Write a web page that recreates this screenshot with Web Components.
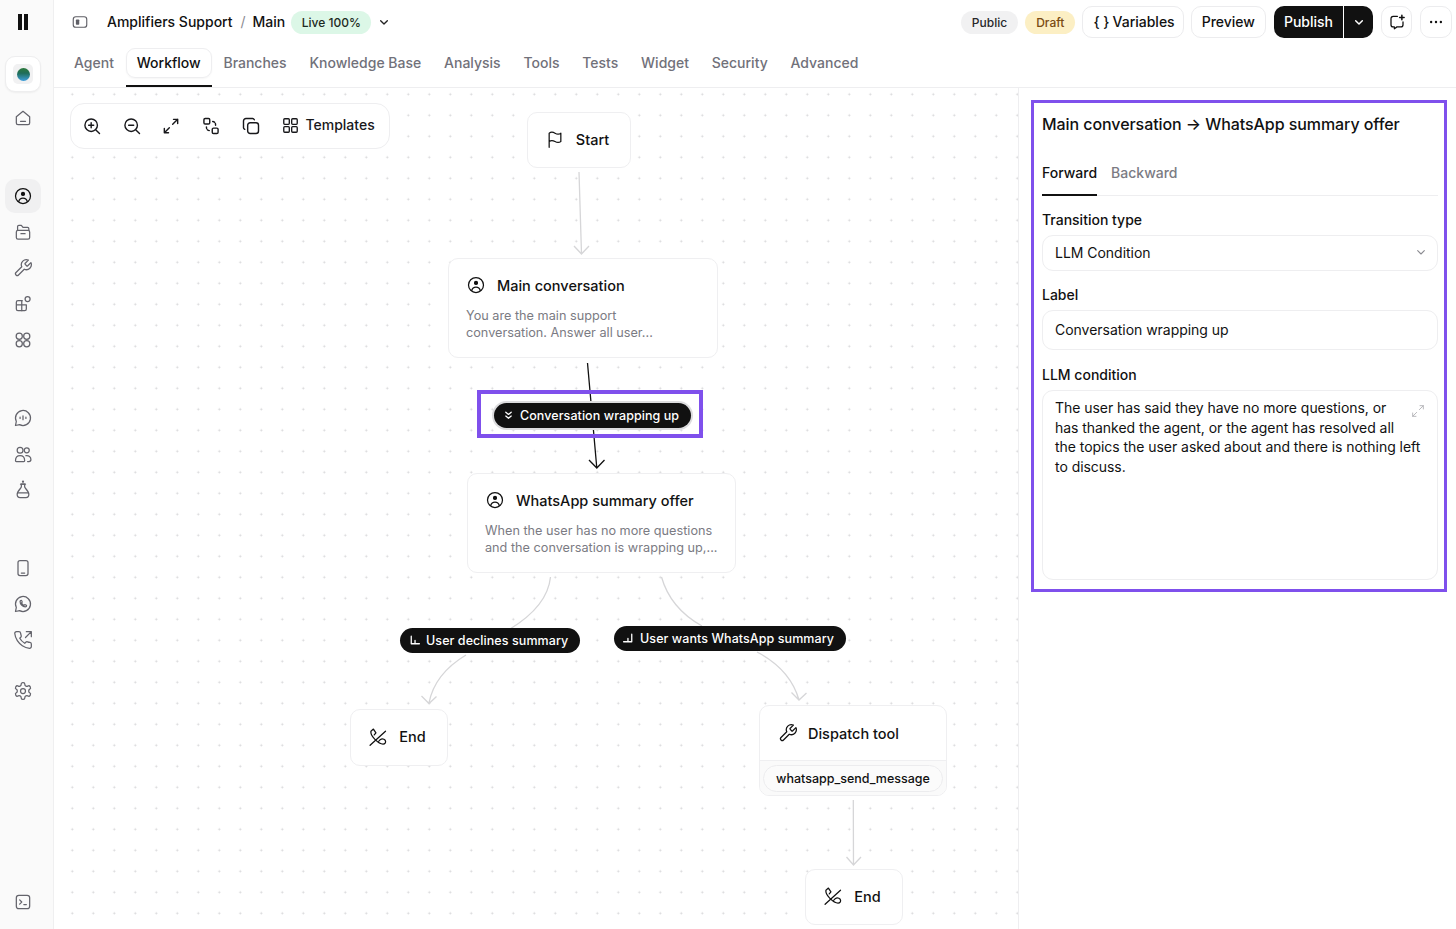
<!DOCTYPE html>
<html lang="en">
<head>
<meta charset="utf-8">
<title>Amplifiers Support</title>
<style>
  html, body { margin: 0; height: 100%; background: #fff; overflow: hidden; }
  body { font-family: Inter, "Liberation Sans", sans-serif; color: #111; }
</style>
</head>
<body>
<app-shell>
  <nav-rail slot="rail"></nav-rail>
  <top-bar slot="top"></top-bar>
  <flow-canvas slot="canvas">
    <tool-bar></tool-bar>
    <flow-node x="527" y="112" w="104" h="56" icon="flag" label="Start"></flow-node>
    <flow-node x="448" y="258" w="270" h="100" icon="agent" label="Main conversation">You are the main support<br>conversation. Answer all user...</flow-node>
    <flow-node x="467" y="473" w="269" h="100" icon="agent" label="WhatsApp summary offer">When the user has no more questions<br>and the conversation is wrapping up,...</flow-node>
    <flow-node x="350" y="709" w="98" h="57" icon="phoneoff" label="End"></flow-node>
    <flow-node x="759" y="705" w="188" h="91" icon="wrench" label="Dispatch tool" tool="whatsapp_send_message"></flow-node>
    <flow-node x="805" y="869" w="98" h="56" icon="phoneoff" label="End"></flow-node>
    <edge-pill x="494" y="403" icon="chevs" ring>Conversation wrapping up</edge-pill>
    <edge-pill x="400" y="628" icon="cornerl">User declines summary</edge-pill>
    <edge-pill x="614" y="626" icon="cornerr">User wants WhatsApp summary</edge-pill>
  </flow-canvas>
  <side-panel slot="panel"></side-panel>
</app-shell>

<script>
(function() {
'use strict';

// stroke icons, all on a 24 box
const ICONS = {
  home: '<path d="M4 10.5 12 4l8 6.5V18a2 2 0 0 1-2 2H6a2 2 0 0 1-2-2z"/><path d="M9 16h6"/>',
  agent: '<circle cx="12" cy="12" r="9"/><circle cx="12" cy="9.5" r="1.8" fill="currentColor"/><path d="M6.8 18.6C7.6 15.6 9.6 14.5 12 14.5s4.400 1.100 5.200 4.100"/>',
  folder: '<rect x="4" y="10" width="16" height="10.500" rx="2"/><path d="M5.500 10V5.500a1.500 1.500 0 0 1 1.500-1.500h3l2 2.500h5.500a1.500 1.500 0 0 1 1.500 1.500v2"/><path d="M9.500 14h5"/>',
  wrench: '<path d="M14.700 6.300a1 1 0 0 0 0 1.400l1.600 1.600a1 1 0 0 0 1.400 0l3.770-3.770a6 6 0 0 1-7.940 7.940l-6.910 6.910a2.120 2.120 0 0 1-3-3l6.910-6.910a6 6 0 0 1 7.940-7.940l-3.760 3.760z"/>',
  blocks: '<path d="M11 8H6a2 2 0 0 0-2 2v8a2 2 0 0 0 2 2h8a2 2 0 0 0 2-2v-5H4"/><path d="M10.500 8v12"/><circle cx="17.500" cy="6" r="3"/>',
  circles: '<circle cx="7.500" cy="7.500" r="3.700"/><circle cx="16.500" cy="7.500" r="3.700"/><circle cx="7.500" cy="16.500" r="3.700"/><circle cx="16.500" cy="16.500" r="3.700"/>',
  chat: '<path d="M7.900 20A9 9 0 1 0 4 16.100L3 21z"/><path d="M8.500 11v1.500M12 9.500v4.500M15.500 11v1.500"/>',
  users: '<circle cx="8.500" cy="7.500" r="3.500"/><circle cx="16.500" cy="7.500" r="3"/><path d="M3 20c0-4 2.500-6 5.500-6s5.500 2 5.500 6c0 .5-.5 1-1 1H4c-.5 0-1-.5-1-1z"/><path d="M15.500 14c3.500-.5 6 1.500 6 4.500 0 1.500-1 2.500-2.500 2.500h-1.500"/>',
  flask: '<path d="M10 8.500V5h4v3.500c0 1 5 5 5 8.500 0 2.500-1.500 4-3.500 4h-7C6.500 21 5 19.500 5 17c0-3.500 5-7.500 5-8.500z"/><path d="M6 15.500h12M9 5h6"/><circle cx="12" cy="2" r=".6" fill="currentColor"/>',
  mobile: '<rect x="6" y="3" width="12" height="18" rx="2.500"/><path d="M10 18h4"/>',
  whatsapp: '<path d="M7.900 20A9 9 0 1 0 4 16.100L3 21z"/><path d="M8.500 9c0-.8.700-1.500 1.300-1.500s1.200 1.500 1.200 2-.7.800-.7 1.200c.5 1.200 1.600 2.300 2.800 2.800.4 0 .7-.7 1.200-.7s2 .6 2 1.200-.7 1.300-1.500 1.300c-3.500 0-6.300-3.300-6.300-6.300z"/>',
  phoneout: '<path d="M22 16.920v3a2 2 0 0 1-2.180 2 19.790 19.790 0 0 1-8.630-3.070 19.500 19.500 0 0 1-6-6 19.790 19.790 0 0 1-3.070-8.670A2 2 0 0 1 4.110 2h3a2 2 0 0 1 2 1.720 12.840 12.840 0 0 0 .7 2.810 2 2 0 0 1-.45 2.110L8.090 9.910a16 16 0 0 0 6 6l1.270-1.270a2 2 0 0 1 2.110-.45 12.840 12.840 0 0 0 2.810.7A2 2 0 0 1 22 16.920z"/><path d="M16 2h6v6M15 9l7-7"/>',
  gear: '<path d="M12.220 2h-.44a2 2 0 0 0-2 2v.18a2 2 0 0 1-1 1.730l-.43.25a2 2 0 0 1-2 0l-.15-.08a2 2 0 0 0-2.730.73l-.22.38a2 2 0 0 0 .73 2.730l.15.1a2 2 0 0 1 1 1.720v.51a2 2 0 0 1-1 1.740l-.15.09a2 2 0 0 0-.73 2.730l.22.38a2 2 0 0 0 2.730.73l.15-.08a2 2 0 0 1 2 0l.43.25a2 2 0 0 1 1 1.730V20a2 2 0 0 0 2 2h.44a2 2 0 0 0 2-2v-.18a2 2 0 0 1 1-1.730l.43-.25a2 2 0 0 1 2 0l.15.08a2 2 0 0 0 2.730-.73l.22-.39a2 2 0 0 0-.73-2.730l-.15-.08a2 2 0 0 1-1-1.740v-.5a2 2 0 0 1 1-1.740l.15-.09a2 2 0 0 0 .73-2.730l-.22-.38a2 2 0 0 0-2.730-.73l-.15.08a2 2 0 0 1-2 0l-.43-.25a2 2 0 0 1-1-1.730V4a2 2 0 0 0-2-2z"/><circle cx="12" cy="12" r="3"/>',
  terminal: '<rect x="4" y="4" width="16" height="16" rx="3"/><path d="m8 9.500 2.500 2.500L8 14.500M13 15h3"/>',
  panel: '<rect x="3" y="5" width="18" height="14" rx="3.500"/><rect x="6.500" y="8.500" width="4.500" height="7" rx="1" fill="currentColor" stroke="none"/>',
  chevron: '<path d="m7 10 5 5 5-5"/>',
  zoomin: '<circle cx="11" cy="11" r="7.500"/><path d="m21 21-4.300-4.300M11 8v6M8 11h6"/>',
  zoomout: '<circle cx="11" cy="11" r="7.500"/><path d="m21 21-4.300-4.300M8 11h6"/>',
  expand: '<path d="m14 10 6-6M15 4h5v5M10 14l-6 6M4 15v5h5"/>',
  layout: '<rect x="3.500" y="3" width="7" height="6.500" rx="1.500"/><rect x="13.500" y="14.500" width="7" height="6.500" rx="1.500"/><path d="M14 6.500c2 0 3.500 1.500 3.500 4.500M10 17.500c-2 0-3.500-1.500-3.500-4.500" stroke-dasharray="2.500 2"/>',
  copy: '<rect x="8" y="8" width="13" height="13" rx="3"/><path d="M4.500 16C3.500 15.500 3 14.800 3 14V6a3 3 0 0 1 3-3h8c.8 0 1.500.5 2 1.500"/>',
  grid: '<rect x="3.500" y="3.500" width="7" height="7" rx="1.200"/><rect x="13.500" y="3.500" width="7" height="7" rx="1.200"/><rect x="3.500" y="13.500" width="7" height="7" rx="1.200"/><rect x="13.500" y="13.500" width="7" height="7" rx="1.200"/>',
  flag: '<path d="M5 22V5c2-1.500 4.500-1.500 7 0s5 1.500 7 0v10c-2 1.500-4.500 1.500-7 0s-5-1.500-7 0"/>',
  phoneoff: '<path d="M2.500 22 21 5"/><path d="M6.500 2.500 3.500 5c-.5 3 1.500 6.500 4.500 9.500 2.500 2.500 6 6 10 6 2.500 0 3.500-2 3-3.700-.5-1.800-3-2.800-5-2.300-2 .5-2.500 2-3 2.500M6.500 2.500l3 4.500-2 2.500"/>',
  chevs: '<path d="m7 6 5 4 5-4M7 13l5 4 5-4"/>',
  cornerl: '<path d="M6 4v14h15M13 18v-6"/>',
  cornerr: '<path d="M18 4v14H3M11 18v-6"/>',
  comment: '<path d="M12.500 4.500H7a3 3 0 0 0-3 3v8a3 3 0 0 0 3 3h1.500v2.500l3.500-2.500h5a3 3 0 0 0 3-3V12"/><path d="M18.500 3v6M15.500 6h6" stroke-width="2"/>',
  dots: '<circle cx="5.500" cy="12" r="1.600" fill="currentColor" stroke="none"/><circle cx="12" cy="12" r="1.600" fill="currentColor" stroke="none"/><circle cx="18.500" cy="12" r="1.600" fill="currentColor" stroke="none"/>'
};

customElements.define('x-icon', class extends HTMLElement {
  connectedCallback() {
    if (this.shadowRoot) return;
    let size = this.getAttribute('size') || 18;
    let sw = this.getAttribute('sw') || 1.7;
    this.attachShadow({mode: 'open'}).innerHTML = `
      <style>:host { display: inline-flex; flex: none; } svg { display: block; }</style>
      <svg width="${size}" height="${size}" viewBox="0 0 24 24" fill="none" stroke="currentColor"
        stroke-width="${sw}" stroke-linecap="round" stroke-linejoin="round">${ICONS[this.getAttribute('name')]}</svg>`;
  }
});

customElements.define('app-shell', class extends HTMLElement {
  constructor() {
    super();
    this.attachShadow({mode: 'open'}).innerHTML = `
      <style>
      :host { display: grid; width: 1456px; height: 929px; overflow: hidden;
        grid-template-columns: 54px 964px 438px; grid-template-rows: 88px 841px; }
      ::slotted([slot="rail"]) { grid-row: 1 / 3; }
      ::slotted([slot="top"]) { grid-column: 2 / 4; }
      </style>
      <slot name="rail"></slot><slot name="top"></slot><slot name="canvas"></slot><slot name="panel"></slot>`;
  }
});

customElements.define('rail-item', class extends HTMLElement {
  constructor() {
    super();
    this.attachShadow({mode: 'open'}).innerHTML = `
      <style>
      :host { display: flex; width: 36px; height: 36px; align-items: center; justify-content: center;
        border-radius: 10px; color: #64646c; }
      :host([active]) { background: #f0f0f1; color: #111; height: 34px; margin: 1px 0; }
      </style><slot></slot>`;
  }
});

customElements.define('nav-rail', class extends HTMLElement {
  constructor() {
    super();
    const item = (n, extra = '') => `<rail-item ${extra}><x-icon name="${n}" size="20" sw="1.500"></x-icon></rail-item>`;
    this.attachShadow({mode: 'open'}).innerHTML = `
      <style>
      :host { display: flex; flex-direction: column; align-items: center; box-sizing: border-box;
        background: #fafafa; border-right: 1px solid #efeff0; padding: 14px 7px 0 0; height: 929px; }
      .mark { display: flex; gap: 2px; height: 16px; margin-bottom: 26px; }
      .mark i { display: block; width: 4px; background: #111; }
      .logo { display: flex; box-sizing: border-box; width: 36px; height: 36px; padding: 7px; margin-bottom: 8px;
        background: #fff; border: 1px solid #eeeeef; border-radius: 10px; box-shadow: 0 1px 2px rgba(0,0,0,.05); }
      .logo div { flex: 1; display: flex; align-items: center; justify-content: center; background: #f1f1f2; border-radius: 5px; }
      .logo b { display: block; width: 13px; height: 13px; border-radius: 50%;
        background: linear-gradient(#2d7a3c 0, #1f6d5a 40%, #3f9fdc 100%); }
      .group { display: flex; flex-direction: column; }
      .a, .b, .c { margin-top: 42px; } .d { margin-top: 15px; }
      .end { margin-top: auto; margin-bottom: 9px; }
      </style>
      <div class="mark"><i></i><i></i></div>
      <div class="logo"><div><b></b></div></div>
      ${item('home')}
      <div class="group a">${item('agent', 'active')}${item('folder')}${item('wrench')}${item('blocks')}${item('circles')}</div>
      <div class="group b">${item('chat')}${item('users')}${item('flask')}</div>
      <div class="group c">${item('mobile')}${item('whatsapp')}${item('phoneout')}</div>
      <div class="group d">${item('gear')}</div>
      <div class="end">${item('terminal')}</div>`;
  }
});

customElements.define('top-bar', class extends HTMLElement {
  constructor() {
    super();
    const tabs = ['Agent', 'Workflow', 'Branches', 'Knowledge Base', 'Analysis', 'Tools', 'Tests', 'Widget', 'Security', 'Advanced'];
    this.attachShadow({mode: 'open'}).innerHTML = `
      <style>
      :host { display: flex; flex-direction: column; box-sizing: border-box; height: 88px; background: #fff;
        border-bottom: 1px solid #eeeef0; font-size: 14px; }
      .row { display: flex; align-items: center; height: 44px; padding: 0 4px 0 17px; }
      .toggle { color: #5f5f66; margin-right: 18px; }
      .crumb { font-weight: 450; position: relative; top: -1px; }
      .sep { color: #8b8b92; margin: 0 7px 0 8px; position: relative; top: -1px; }
      .pill { display: inline-flex; align-items: center; height: 23px; padding: 0 11px; border-radius: 12px;
        font-size: 12px; font-weight: 500; }
      .live { background: #dcf7e7; color: #1c2a22; margin-left: 6px; padding: 0 10.500px; }
      .more { margin-left: 5px; color: #222; }
      .spacer { flex: 1; }
      .right { display: flex; align-items: center; gap: 7px; }
      .public { background: #f1f1f2; color: #27272a; }
      .draft { background: #fcefc4; color: #7a4a12; }
      .btn { display: inline-flex; align-items: center; justify-content: center; box-sizing: border-box; height: 32px;
        padding: 0 10px 1px; border: 1px solid #ececee; border-radius: 10px; font-weight: 450; background: #fff; white-space: pre; }
      .vars { padding-right: 8px; }
      .pub { display: flex; height: 32px; background: #111; color: #fff; border-radius: 10px; overflow: hidden; font-weight: 500; margin-left: 1px; }
      .pub span { display: flex; align-items: center; padding: 0 10px 1px; }
      .pub div { display: flex; align-items: center; justify-content: center; width: 29px; border-left: 1px solid #fff; }
      .square { width: 31px; padding: 0; margin-left: 1px; }
      .square + .square { width: 32px; }
      .braces { margin-right: 3px; }
      nav { display: flex; gap: .8px; padding-left: 9px; flex: 1; align-items: flex-start; padding-top: 4px; }
      nav a { display: flex; align-items: center; height: 30px; padding: 0 10px 1px; color: #71717a;
        font-weight: 450; position: relative; box-sizing: border-box; border: 1px solid transparent; border-radius: 9px; }
      nav a.on { color: #111; font-weight: 500; border-color: #eeeef0; box-shadow: 0 1px 2px rgba(0,0,0,.04); }
      nav a.on::after { content: ""; position: absolute; left: -1px; right: -1px; bottom: -10px; height: 2px; background: #111; }
      </style>
      <div class="row">
        <x-icon class="toggle" name="panel" size="18" sw="1.500"></x-icon>
        <span class="crumb">Amplifiers Support</span><span class="sep">/</span><span class="crumb">Main</span>
        <span class="pill live">Live 100%</span>
        <x-icon class="more" name="chevron" size="16" sw="2"></x-icon>
        <div class="spacer"></div>
        <div class="right">
          <span class="pill public">Public</span>
          <span class="pill draft">Draft</span>
          <span class="btn vars"><span class="braces">{ }</span>Variables</span>
          <span class="btn">Preview</span>
          <div class="pub"><span>Publish</span><div><x-icon name="chevron" size="16" sw="2.200"></x-icon></div></div>
          <span class="btn square"><x-icon name="comment" size="18"></x-icon></span>
          <span class="btn square"><x-icon name="dots" size="18"></x-icon></span>
        </div>
      </div>
      <nav>${tabs.map(t => `<a class="${t === 'Workflow' ? 'on' : ''}">${t}</a>`).join('')}</nav>`;
  }
});

customElements.define('tool-bar', class extends HTMLElement {
  constructor() {
    super();
    const names = ['zoomin', 'zoomout', 'expand', 'layout', 'copy'];
    this.attachShadow({mode: 'open'}).innerHTML = `
      <style>
      :host { position: absolute; left: 16px; top: 15px; display: flex; align-items: center; box-sizing: border-box;
        width: 320px; height: 46px; padding: 0 15px 0 11px; gap: 19.700px; background: #fff; border: 1px solid #eeeef0;
        border-radius: 14px; font-size: 14px; font-weight: 450; color: #18181b; }
      .tpl { display: flex; align-items: center; gap: 5px; margin-left: 1px; padding-bottom: 2px; }
      .tpl b { font-weight: inherit; position: relative; top: -1px; }
      </style>
      ${names.map(n => `<x-icon name="${n}" size="20"></x-icon>`).join('')}
      <span class="tpl"><x-icon name="grid" size="19"></x-icon><b>Templates</b></span>`;
  }
});

// canvas children are placed from page coordinates, the canvas starts at 54,88
const place = el => {
  el.style.left = (+el.getAttribute('x') - 54) + 'px';
  el.style.top = (+el.getAttribute('y') - 88) + 'px';
};

customElements.define('flow-node', class extends HTMLElement {
  constructor() {
    super();
    this.attachShadow({mode: 'open'});
  }
  connectedCallback() {
    place(this);
    this.style.width = this.getAttribute('w') + 'px';
    this.style.height = this.getAttribute('h') + 'px';
    let tool = this.getAttribute('tool');
    let kind = tool ? 'tooled' : this.childNodes.length ? 'text' : 'only';
    this.shadowRoot.innerHTML = `
      <style>
      :host { position: absolute; display: flex; flex-direction: column; box-sizing: border-box; background: #fff;
        border: 1px solid #efeff1; border-radius: 10px; overflow: hidden; color: #111; }
      .head { display: flex; align-items: center; gap: 11px; padding: 0 18px; font-size: 14.500px; font-weight: 450; flex: none; height: 54px; }
      .tooled { gap: 10px; }
      .text { height: 52px; padding-left: 17px; }
      .only { flex: 1; height: auto; justify-content: center; padding: 0 4px 2px 0; }
      .desc { padding: 0 17px; margin-top: -4px; font-size: 12.700px; line-height: 17px; color: #7b7b83; white-space: nowrap; }
      .tool { flex: 1; display: flex; align-items: center; justify-content: center; background: #fafafa; border-top: 1px solid #efeff1; }
      .tool span { display: block; box-sizing: border-box; width: 180px; height: 27px; line-height: 25px; text-align: center;
        background: #fbfbfb; border: 1px solid #ececee; border-radius: 14px; font-size: 12.500px; font-weight: 500; }
      </style>
      <div class="head ${kind}"><x-icon name="${this.getAttribute('icon')}" size="20" sw="1.500"></x-icon>${this.getAttribute('label')}</div>
      ${kind === 'text' ? '<div class="desc"><slot></slot></div>' : ''}
      ${tool ? `<div class="tool"><span>${tool}</span></div>` : ''}`;
  }
});

customElements.define('edge-pill', class extends HTMLElement {
  constructor() {
    super();
    this.attachShadow({mode: 'open'});
  }
  connectedCallback() {
    place(this);
    this.shadowRoot.innerHTML = `
      <style>
      :host { position: absolute; z-index: 3; display: flex; align-items: center; gap: 5px; box-sizing: border-box; height: 25px;
        padding: 0 12px 0 8px; background: #111; color: #fff; border-radius: 13px; font-size: 12.500px; font-weight: 500;
        letter-spacing: .07px; white-space: nowrap; }
      :host([ring]) { box-shadow: 0 0 0 2px #dcdcde; }
      </style>
      <x-icon name="${this.getAttribute('icon')}" size="13" sw="2.400"></x-icon><slot></slot>`;
  }
});

customElements.define('flow-canvas', class extends HTMLElement {
  constructor() {
    super();
    this.attachShadow({mode: 'open'}).innerHTML = `
      <style>
      :host { display: block; position: relative; overflow: hidden; background-color: #fff;
        background-image: radial-gradient(circle, #d6d6d8 0, #d6d6d8 .8px, transparent 1.200px);
        background-size: 21px 21px; background-position: 7.800px -4.200px; }
      svg { position: absolute; left: 0; top: 0; z-index: 1; }
      path { fill: none; stroke: #d6d6d8; stroke-width: 1.300; }
      .on { stroke: #111; }
      .mark { position: absolute; z-index: 2; box-sizing: border-box; left: 423px; top: 302px; width: 226px; height: 48px;
        border: 4px solid #7f50ec; }
      </style>
      <svg width="964" height="841" viewBox="54 88 964 841">
        <path d="M579 172 581.500 254M574 246l7.500 8 7.500-8"/>
        <path d="M550.500 577C548 602 528 618 510 629M466 655C446 667 433 682 429 703M421.500 696l7.500 7.500 7.500-7"/>
        <path d="M661.500 577C668 600 684 616 702 626M757 652C778 663 793 679 799 700M791.500 692.500l7.500 7.500 7.500-7"/>
        <path d="M853.300 800 853.500 865M846.500 857l7 8 7.500-8"/>
        <path class="on" d="M587.500 363 596.800 468M589 460l7.800 8 7.700-8"/>
      </svg>
      <div class="mark"></div>
      <slot></slot>`;
  }
});

customElements.define('form-field', class extends HTMLElement {
  constructor() {
    super();
    this.attachShadow({mode: 'open'}).innerHTML = `
      <style>
      :host { display: block; font-size: 14px; }
      .label { height: 25px; font-weight: 450; line-height: 20px; }
      .box { display: flex; align-items: center; box-sizing: border-box; height: var(--h, 40px); padding: 0 12px 2px;
        border: 1px solid #eeeef0; border-radius: 11px; background: #fff; position: relative; letter-spacing: -.03px; }
      :host([area]) .box { align-items: flex-start; padding-top: 7px; line-height: 19.700px; white-space: nowrap; letter-spacing: -.05px; }
      ::slotted(x-icon) { position: absolute; right: 8px; color: #8a8a90; }
      </style>
      <div class="label"></div>
      <div class="box"><slot></slot></div>`;
  }
  connectedCallback() {
    this.shadowRoot.querySelector('.label').textContent = this.getAttribute('label');
  }
});

customElements.define('side-panel', class extends HTMLElement {
  constructor() {
    super();
    this.attachShadow({mode: 'open'}).innerHTML = `
      <style>
      :host { display: block; position: relative; box-sizing: border-box; background: #fff; border-left: 1px solid #eeeef0;
        padding: 26px 18px 0 23px; }
      h2 { margin: 0; font-size: 16px; font-weight: 450; line-height: 20px; white-space: nowrap; letter-spacing: -.07px; }
      .tabs { display: flex; gap: 14px; margin-top: 19px; border-bottom: 1px solid #eeeef0; font-size: 14px; font-weight: 450; height: 43px; box-sizing: border-box; }
      .tabs span { display: flex; align-items: center; height: 42px; box-sizing: border-box; color: #7b7b83; padding-bottom: 3px; }
      .tabs .on { color: #111; font-weight: 500; border-bottom: 2px solid #111; height: 43px; padding-bottom: 2px; }
      form-field { margin-top: 14px; }
      .f3 { margin-top: 15px; }
      .mark { position: absolute; left: 12px; top: 12px; width: 416px; height: 492px; box-sizing: border-box; border: 3.500px solid #7f50ec; pointer-events: none; }
      </style>
      <h2>Main conversation → WhatsApp summary offer</h2>
      <div class="tabs"><span class="on">Forward</span><span>Backward</span></div>
      <form-field label="Transition type" style="--h:36px">LLM Condition<x-icon name="chevron" size="16" sw="1.600"></x-icon></form-field>
      <form-field label="Label">Conversation wrapping up</form-field>
      <form-field class="f3" area label="LLM condition" style="--h:190px"><div>The user has said they have no more questions, or<br>has thanked the agent, or the agent has resolved all<br>the topics the user asked about and there is nothing left<br>to discuss.</div><x-icon name="expand" size="16" sw="1.400" style="top:12px;right:11px;color:#b5b5b8"></x-icon></form-field>
      <div class="mark"></div>`;
  }
});
})();
</script>
</body>
</html>
